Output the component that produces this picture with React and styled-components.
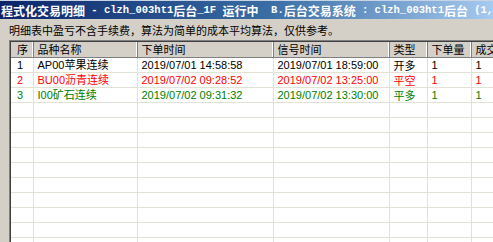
import React from "react";
import styled, { createGlobalStyle } from "styled-components";

const GlobalStyle = createGlobalStyle`
  html, body {
    margin: 0;
    padding: 0;
    width: 493px;
    height: 242px;
    overflow: hidden;
    background: #d4d0c8;
  }
`;

const orders = [
  { no: 1, name: "AP00苹果连续", placed: "2019/07/01 14:58:58", signal: "2019/07/01 18:59:00", kind: "开多", qty: 1, done: 1, tone: "normal" },
  { no: 2, name: "BU00沥青连续", placed: "2019/07/02 09:28:52", signal: "2019/07/02 13:25:00", kind: "平空", qty: 1, done: 1, tone: "loss" },
  { no: 3, name: "I00矿石连续", placed: "2019/07/02 09:31:32", signal: "2019/07/02 13:30:00", kind: "平多", qty: 1, done: 1, tone: "gain" }
];

const toneColor = { normal: "#000000", loss: "#ff0000", gain: "#008000" };

const columns = [
  { title: "序", width: 22, first: true },
  { title: "品种名称", width: 104 },
  { title: "下单时间", width: 136 },
  { title: "信号时间", width: 116 },
  { title: "类型", width: 38 },
  { title: "下单量", width: 44 },
  { title: "成交", width: 60 }
];

const Window = styled.div`
  width: 493px;
  height: 242px;
  display: flex;
  flex-direction: column;
  background: #d4d0c8;
  font-family: "Liberation Sans", "Noto Sans CJK SC", sans-serif;
  overflow: hidden;
`;

const TitleBar = styled.div`
  height: 19px;
  flex: none;
  display: flex;
  align-items: center;
  padding-left: 1px;
  background: linear-gradient(to right, #0a246a 0%, #3a6ea5 55%, #a6caf0 100%);
  border-top: 1px solid #c8d4e4;
  box-sizing: border-box;
  color: #ffffff;
  font-family: "Noto Sans CJK SC", sans-serif;
  font-size: 12px;
  font-weight: 700;
  white-space: pre;
  overflow: hidden;
`;

const Latin = styled.span`
  font-family: "Liberation Mono", monospace;
  font-size: 10.5px;
  font-weight: 700;
`;

const Notice = styled.div`
  height: 21px;
  flex: none;
  display: flex;
  align-items: center;
  padding-left: 9px;
  font-family: "Noto Sans CJK SC", sans-serif;
  font-size: 11px;
  color: #000000;
  white-space: nowrap;
`;

const ListFrame = styled.div`
  flex: 1;
  margin-left: 9px;
  background: #ffffff;
  border-top: 1px solid #808080;
  border-left: 1px solid #808080;
  box-shadow: inset 1px 1px 0 #404040;
  overflow: hidden;
  padding: 1px 0 0 1px;
`;

const Grid = styled.table`
  border-collapse: collapse;
  table-layout: fixed;
  width: 520px;
  font-size: 11px;
`;

const HeadCell = styled.th`
  height: 15px;
  padding: 0 0 0 ${p => (p.$first ? 6 : 4)}px;
  text-align: left;
  font-weight: 400;
  font-family: "Noto Sans CJK SC", sans-serif;
  color: #000000;
  background: #d4d0c8;
  border-bottom: 1px solid #808080;
  border-right: 1px solid #808080;
  box-shadow: inset -1px 0 0 #ffffff;
  white-space: nowrap;
  overflow: hidden;
  line-height: 15px;
`;

const Row = styled.tr`
  color: ${p => toneColor[p.$tone]};
`;

const Cell = styled.td`
  height: 14px;
  padding: 0 0 0 ${p => (p.$first ? 6 : 4)}px;
  border-right: 1px solid #e2e2d4;
  border-bottom: 1px solid #e2e2d4;
  white-space: nowrap;
  overflow: hidden;
  line-height: 14px;
  font-family: ${p => (p.$cjk ? `"Noto Sans CJK SC", sans-serif` : `"Liberation Sans", "Noto Sans CJK SC", sans-serif`)};
`;

const emptyRows = Array.from({ length: 10 });

export default function App() {
  return (
    <>
      <GlobalStyle />
      <Window>
        <TitleBar>
          程式化交易明细<Latin> - clzh_003ht1</Latin>后台<Latin>_1F </Latin>运行中<Latin>  B.</Latin>后台交易系统<Latin> : clzh_003ht1</Latin>后台<Latin> (1,</Latin>
        </TitleBar>
        <Notice>明细表中盈亏不含手续费，算法为简单的成本平均算法，仅供参考。</Notice>
        <ListFrame>
          <Grid>
            <colgroup>
              {columns.map(c => (
                <col key={c.title} style={{ width: c.width }} />
              ))}
            </colgroup>
            <thead>
              <tr>
                {columns.map(c => (
                  <HeadCell key={c.title} $first={c.first}>
                    {c.title}
                  </HeadCell>
                ))}
              </tr>
            </thead>
            <tbody>
              {orders.map(o => (
                <Row key={o.no} $tone={o.tone}>
                  <Cell $first>{o.no}</Cell>
                  <Cell>{o.name}</Cell>
                  <Cell>{o.placed}</Cell>
                  <Cell>{o.signal}</Cell>
                  <Cell $cjk>{o.kind}</Cell>
                  <Cell>{o.qty}</Cell>
                  <Cell>{o.done}</Cell>
                </Row>
              ))}
              {emptyRows.map((_, i) => (
                <Row key={`e${i}`} $tone="normal">
                  {columns.map(c => (
                    <Cell key={c.title} $first={c.first} />
                  ))}
                </Row>
              ))}
            </tbody>
          </Grid>
        </ListFrame>
      </Window>
    </>
  );
}
